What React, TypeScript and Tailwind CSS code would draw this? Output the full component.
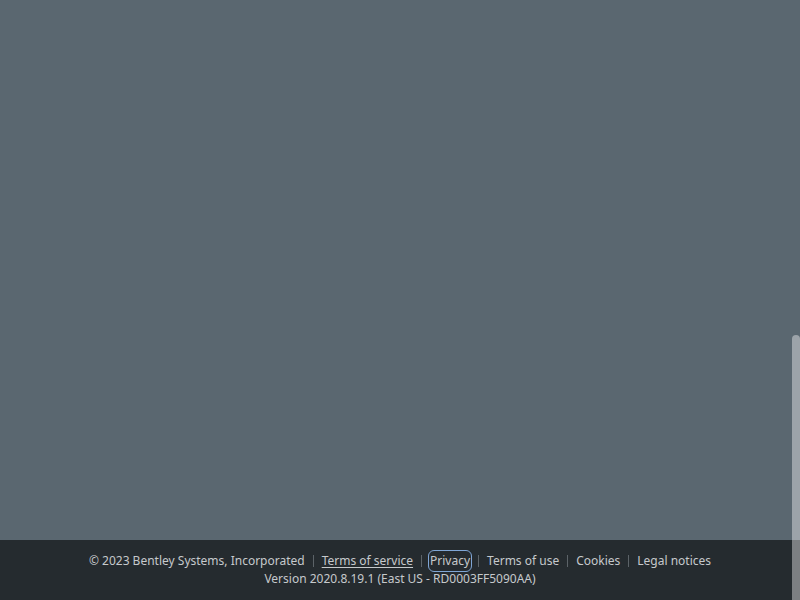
import React from 'react';

const links = [
  { label: 'Terms of service', underline: true },
  { label: 'Privacy', focused: true },
  { label: 'Terms of use' },
  { label: 'Cookies' },
  { label: 'Legal notices' },
];

function Separator() {
  return <span className="mx-2 h-3 w-px bg-[#5c6368]" />;
}

export default function App() {
  return (
    <div className="relative flex h-[600px] w-[800px] flex-col overflow-hidden bg-[#5a6770] font-['Noto_Sans',sans-serif]">
      <main className="flex-1" />

      <footer className="flex h-[60px] flex-col items-center justify-center bg-[#252b2f] text-[12px] leading-[18px] text-[#c5c9cc]">
        <div className="flex items-center">
          <span>© 2023 Bentley Systems, Incorporated</span>
          {links.map((l) => (
            <React.Fragment key={l.label}>
              <Separator />
              <a
                href="#"
                className={
                  l.underline
                    ? 'underline underline-offset-2'
                    : l.focused
                      ? 'rounded-[4px] outline outline-1 outline-offset-1 outline-[#7fa6d6]'
                      : ''
                }
              >
                {l.label}
              </a>
            </React.Fragment>
          ))}
        </div>
        <div>Version 2020.8.19.1 (East US - RD0003FF5090AA)</div>
      </footer>

      {/* overlay scrollbar thumb */}
      <div className="absolute right-0 top-[335px] h-[268px] w-2 rounded-full bg-white/40" />
    </div>
  );
}
